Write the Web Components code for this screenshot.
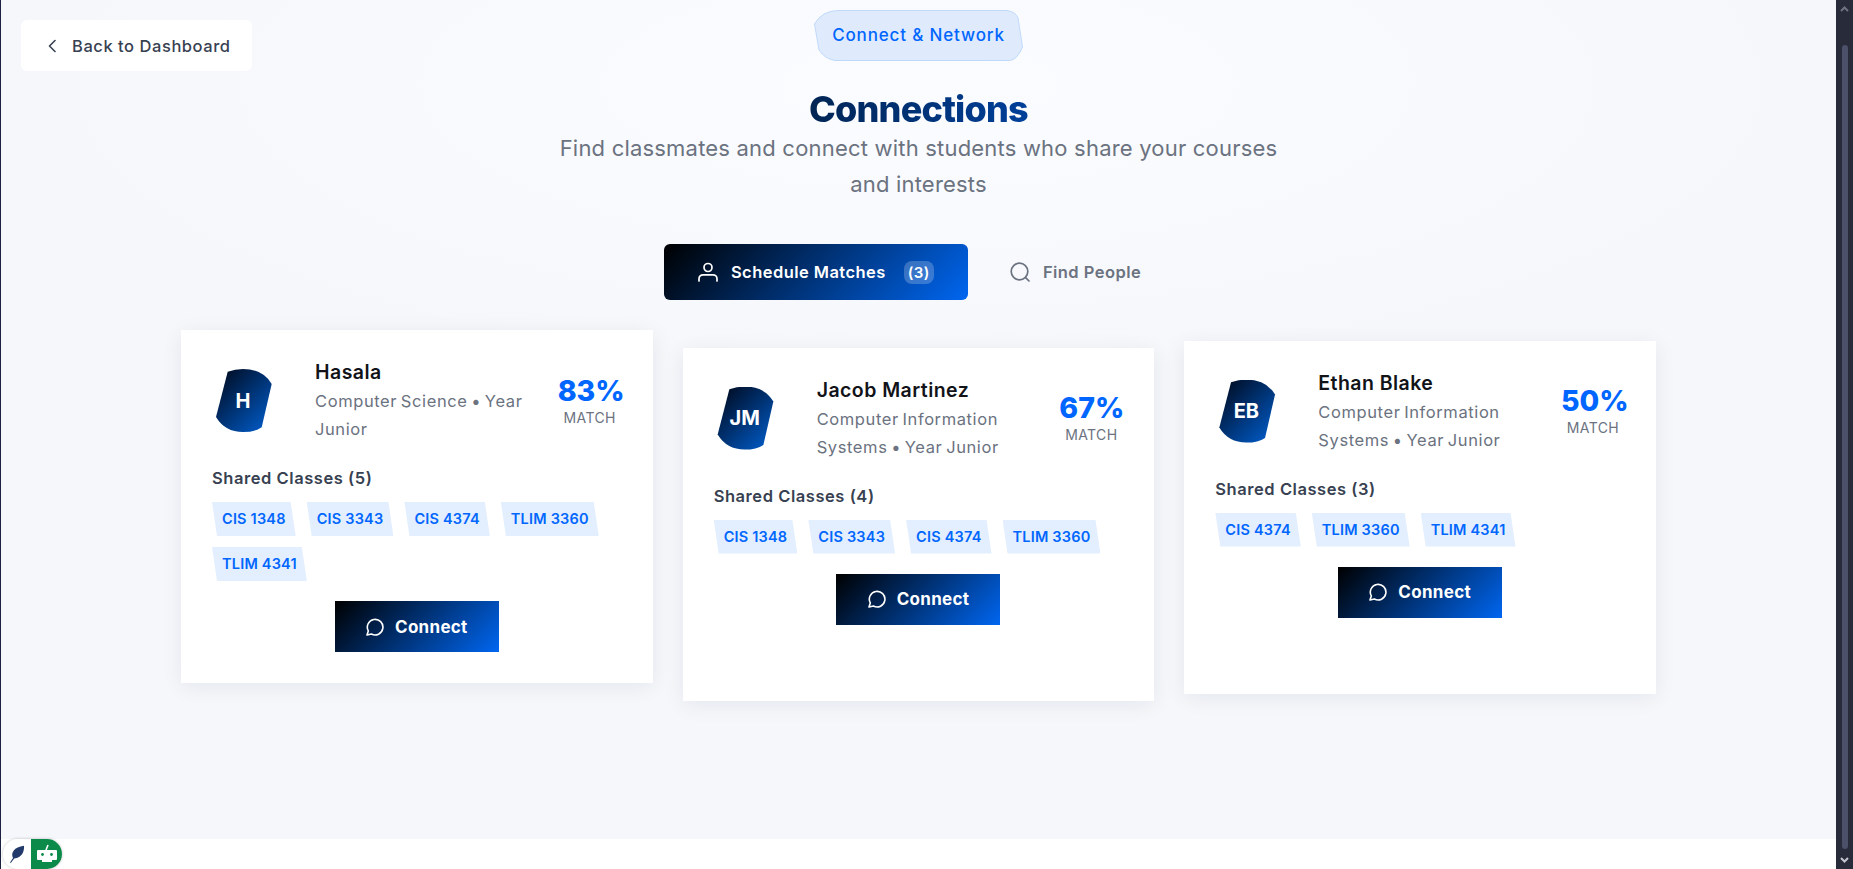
<!DOCTYPE html>
<html lang="en">
<head>
<meta charset="utf-8">
<title>Connections</title>
<style>
  html, body { margin: 0; height: 100%; overflow: hidden; background: #fff; }
  body { font-family: Inter, Roboto, "Liberation Sans", sans-serif; }
</style>
</head>
<body>
<app-shell>
  <back-button slot="back">Back to Dashboard</back-button>
  <page-badge slot="badge">Connect &amp; Network</page-badge>
  <span slot="title">Connections</span>
  <span slot="subtitle">Find classmates and connect with students who share your courses and interests</span>
  <tab-bar slot="tabs"></tab-bar>
  <match-card slot="cards" initials="H" name="Hasala" major="Computer Science • Year Junior" score="83%" classes="CIS 1348,CIS 3343,CIS 4374,TLIM 3360,TLIM 4341"></match-card>
  <match-card slot="cards" style="--drop:17.6px" initials="JM" name="Jacob Martinez" major="Computer Information Systems • Year Junior" score="67%" classes="CIS 1348,CIS 3343,CIS 4374,TLIM 3360"></match-card>
  <match-card slot="cards" style="--drop:10.6px" initials="EB" name="Ethan Blake" major="Computer Information Systems • Year Junior" score="50%" classes="CIS 4374,TLIM 3360,TLIM 4341"></match-card>
  <widget-pill slot="widget"></widget-pill>
</app-shell>

<script>
  const gradient = 'linear-gradient(135deg, #000 0%, #0066f0 100%)';

  // page frame: dark edge, content column, dark scrollbar
  class AppShell extends HTMLElement {
    constructor() {
      super();
      this.attachShadow({ mode: 'open' }).innerHTML = `
        <style>
          :host { display: grid; grid-template-columns: 1px 1fr 17px; height: 869px; position: relative; }
          .edge { background: #1c2140; }
          .content { display: flex; flex-direction: column; min-width: 0; background: #fff; }
          main {
            height: 839px; box-sizing: border-box; padding: 10px 180px 0;
            background:
              radial-gradient(900px 300px at 50% 10%, #fbfcff 0%, rgba(251,252,255,0) 100%),
              #f5f7fb;
          }
          header { display: grid; grid-template-columns: 1fr auto 1fr; margin: 0 -160px; }
          .back { justify-self: start; margin-top: 10px; }
          .middle { display: flex; flex-direction: column; align-items: center; text-align: center; }
          h1 {
            margin: 28px 0 0; font-size: 36px; line-height: 41px; font-weight: 800; letter-spacing: -0.8px;
            background: linear-gradient(90deg, #002554, #00409a); -webkit-background-clip: text; background-clip: text; color: transparent;
          }
          p { margin: 0; width: 740px; font-size: 22px; line-height: 36px; letter-spacing: 0.2px; color: #6b7280; }
          .tabs { display: flex; justify-content: center; margin: 42px 0 30px; }
          .cards { display: grid; grid-template-columns: repeat(3, 1fr); gap: 30px; align-items: start; }
          .tail { flex: 1; background: #fff; }
          .bar { background: #272b3a; display: flex; flex-direction: column; align-items: center; }
          .arrow { height: 18px; width: 17px; display: block; flex: none; }
          .thumb { width: 6px; flex: 1; margin: 27px 0 2px; background: #4c5068; border-radius: 3px; }
          .widget { position: absolute; left: 3px; bottom: 0; }
        </style>
        <div class="edge"></div>
        <div class="content">
          <main>
            <header>
              <div class="back"><slot name="back"></slot></div>
              <div class="middle">
                <slot name="badge"></slot>
                <h1><slot name="title"></slot></h1>
                <p><slot name="subtitle"></slot></p>
              </div>
              <div></div>
            </header>
            <div class="tabs"><slot name="tabs"></slot></div>
            <div class="cards"><slot name="cards"></slot></div>
          </main>
          <div class="tail"></div>
        </div>
        <div class="bar">
          <svg class="arrow" viewBox="0 0 17 18"><path d="M5 11l3.5-3.5L12 11" fill="none" stroke="#6f7280" stroke-width="2"/></svg>
          <div class="thumb"></div>
          <svg class="arrow" viewBox="0 0 17 18"><path d="M5 7l3.5 3.5L12 7" fill="none" stroke="#c4c6cf" stroke-width="2"/></svg>
        </div>
        <div class="widget"><slot name="widget"></slot></div>
      `;
    }
  }

  class BackButton extends HTMLElement {
    constructor() {
      super();
      this.attachShadow({ mode: 'open' }).innerHTML = `
        <style>
          :host {
            display: inline-flex; align-items: center; gap: 16px; box-sizing: border-box;
            width: 231px; height: 51px; padding-left: 27px; background: #fff; border-radius: 6px;
            font-size: 16.5px; font-weight: 500; color: #374151; letter-spacing: 0.55px;
          }
          svg { width: 8px; height: 14px; flex: none; }
        </style>
        <svg viewBox="0 0 8 14"><path d="M7 1.5L1.5 7 7 12.5" fill="none" stroke="#374151" stroke-width="1.6" stroke-linecap="round" stroke-linejoin="round"/></svg>
        <slot></slot>
      `;
    }
  }

  class PageBadge extends HTMLElement {
    constructor() {
      super();
      this.attachShadow({ mode: 'open' }).innerHTML = `
        <style>
          :host { display: inline-flex; position: relative; width: 209px; height: 51px; align-items: center; justify-content: center;
            font-size: 17px; font-weight: 500; color: #0066ff; letter-spacing: 0.85px; }
          svg { position: absolute; inset: 0; width: 100%; height: 100%; }
          span { position: relative; top: -1px; }
        </style>
        <svg viewBox="0 0 209 51"><path d="M0.5 14 Q8 0.5 25 0.5 L193 0.5 Q202 2 204 8 L208.5 37 Q203 50.5 195 50.5 L21 50.5 Q11 49 5 40 Z" fill="#dfebfc" stroke="#bfd9fb"/></svg>
        <span><slot></slot></span>
      `;
    }
  }

  class TabBar extends HTMLElement {
    constructor() {
      super();
      this.attachShadow({ mode: 'open' }).innerHTML = `
        <style>
          :host { display: flex; gap: 8px; font-size: 16.5px; font-weight: 600; letter-spacing: 0.45px; }
          .tab { display: flex; align-items: center; height: 56px; box-sizing: border-box; padding: 0 34px; border-radius: 6px; }
          .on { background: ${gradient}; color: #fff; width: 304px; }
          .off { color: #6b7280; padding-right: 32px; }
          .label { margin-left: 13px; white-space: nowrap; }
          .count { margin-left: 18px; width: 30px; height: 23px; flex: none; border-radius: 8px; background: rgba(255,255,255,.22);
            display: flex; align-items: center; justify-content: center; font-size: 15px; }
          svg { width: 20px; height: 20px; flex: none; fill: none; stroke: currentColor; stroke-width: 1.7; stroke-linecap: round; }
        </style>
        <div class="tab on">
          <svg viewBox="0 0 20 20"><circle cx="10" cy="5.5" r="4"/><path d="M1 19v-2.2a4 4 0 0 1 4-4h10a4 4 0 0 1 4 4V19"/></svg>
          <span class="label">Schedule Matches</span>
          <span class="count">(3)</span>
        </div>
        <div class="tab off">
          <svg viewBox="0 0 20 20"><circle cx="9.5" cy="9.5" r="8.3"/><path d="M15.6 15.6L19 19"/></svg>
          <span class="label">Find People</span>
        </div>
      `;
    }
  }

  class MatchCard extends HTMLElement {
    connectedCallback() {
      const get = n => this.getAttribute(n);
      const classes = get('classes').split(',');
      this.attachShadow({ mode: 'open' }).innerHTML = `
        <style>
          :host { display: block; box-sizing: border-box; height: 353px; margin-top: var(--drop, 0px); padding: 28px 31px 31px;
            background: #fff; box-shadow: 0 4px 20px rgba(15,23,42,.07); }
          .top { display: flex; align-items: center; }
          .avatar { width: 60px; height: 63px; flex: none; margin: 0 42px 0 1px; color: #fff;
            background: linear-gradient(135deg, #000c22 8%, #0059c4 92%);
            clip-path: path('M14.7 2.7Q22 0 30 0Q50 0 58.7 15L48.7 58.3Q42 63 30 63Q12 63 3 48Z');
            display: flex; align-items: center; justify-content: center; font-size: 20px; font-weight: 700; }
          .info { flex: 1; min-width: 0; }
          .name { font-size: 19.5px; line-height: 28px; font-weight: 600; letter-spacing: .45px; color: #111318; }
          .major { margin-top: 1px; font-size: 16.5px; line-height: 28px; letter-spacing: .6px; word-spacing: -1.5px; color: #6b7280; }
          .score { margin-left: 20px; text-align: center; width: 64px; }
          .pct { font-size: 28.5px; line-height: 36px; font-weight: 800; color: #0066ff; margin-top: -2px; }
          .lbl { font-size: 14px; line-height: 18px; color: #6b7280; letter-spacing: .4px; }
          .shared { margin-top: 22px; font-size: 16.5px; line-height: 26px; font-weight: 600; letter-spacing: .55px; color: #374151; }
          .chips { display: flex; flex-wrap: wrap; gap: 11px; margin-top: 11px; }
          .chip { padding: 8px 10px; line-height: 18px; font-size: 14.5px; font-weight: 600; letter-spacing: .2px; color: #0066ff; background: #e3effe;
            clip-path: polygon(0 0, calc(100% - 5px) 0, 100% 100%, 5px 100%); }
          .foot { display: flex; justify-content: center; margin-top: 20px; }
          .connect { display: flex; align-items: center; justify-content: center; gap: 11px; width: 164px; height: 51px;
            background: ${gradient}; color: #fff; font-size: 17px; font-weight: 700; letter-spacing: .3px; }
          .connect svg { width: 18px; height: 18px; fill: none; stroke: #fff; stroke-width: 1.6; stroke-linejoin: round; }
        </style>
        <div class="top">
          <div class="avatar">${get('initials')}</div>
          <div class="info">
            <div class="name">${get('name')}</div>
            <div class="major">${get('major')}</div>
          </div>
          <div class="score">
            <div class="pct">${get('score')}</div>
            <div class="lbl">MATCH</div>
          </div>
        </div>
        <div class="shared">Shared Classes (${classes.length})</div>
        <div class="chips">${classes.map(c => `<span class="chip">${c}</span>`).join('')}</div>
        <div class="foot">
          <div class="connect">
            <svg viewBox="0 0 18 18"><path d="M1 17l1.3-4.1A7.8 7.8 0 1 1 5.4 16Z"/></svg>
            <span>Connect</span>
          </div>
        </div>
      `;
    }
  }

  class WidgetPill extends HTMLElement {
    constructor() {
      super();
      this.attachShadow({ mode: 'open' }).innerHTML = `
        <style>
          :host { display: flex; width: 59px; height: 30px; border-radius: 15px; overflow: hidden; box-shadow: 0 0 3px rgba(0,0,0,.25); }
          .a { width: 28px; background: #fff; display: flex; align-items: center; justify-content: center; }
          .b { width: 31px; background: #0b8a4a; display: flex; align-items: center; justify-content: center; }
        </style>
        <div class="a"><svg width="16" height="18" viewBox="0 0 16 18"><path d="M1 17.5L4 13C1.5 8 5 2 15 .8C15.6 6 13 13 5.2 13.6L1.8 18Z" fill="#223a6b"/></svg></div>
        <div class="b"><svg width="22" height="20" viewBox="0 0 22 20"><path d="M10 6L12 1" stroke="#fff" stroke-width="1.6"/><rect x="1" y="6" width="20" height="10" rx="1" fill="#fff"/><rect x="6" y="16" width="10" height="2" fill="#fff"/><circle cx="6.5" cy="10.5" r="1.4" fill="#0b8a4a"/><circle cx="15.5" cy="10.5" r="1.4" fill="#0b8a4a"/></svg></div>
      `;
    }
  }

  customElements.define('app-shell', AppShell);
  customElements.define('back-button', BackButton);
  customElements.define('page-badge', PageBadge);
  customElements.define('tab-bar', TabBar);
  customElements.define('match-card', MatchCard);
  customElements.define('widget-pill', WidgetPill);
</script>
</body>
</html>
